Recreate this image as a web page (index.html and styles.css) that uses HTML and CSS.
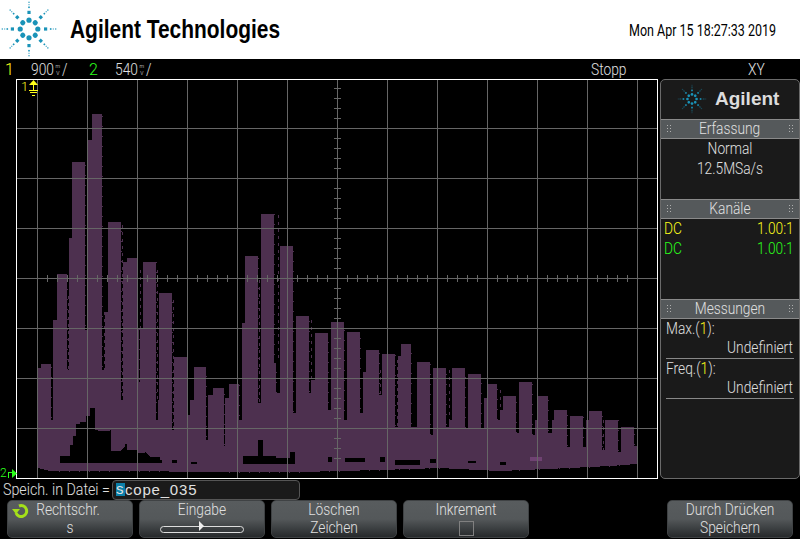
FILE: index.html
```html
<!DOCTYPE html>
<html lang="de">

<head>
    <meta charset="UTF-8">
    <title>Agilent Technologies</title>
    <link rel="stylesheet" href="styles.css">
</head>

<body>
    <svg class="defs" width="0" height="0">
        <defs>
            <!-- one arm of the starburst, rotated eight times below -->
            <g id="arm">
                <circle cx="0" cy="-8.8" r="2.6" />
                <rect x="-1.6" y="-18.2" width="3.2" height="3.2" />
                <rect x="-0.8" y="-22.5" width="1.6" height="1.6" />
                <rect x="-0.6" y="-27.3" width="1.2" height="1.2" />
                <rect x="-0.5" y="-24.8" width="1" height="1" />
            </g>
            <g id="star">
                <use href="#arm" />
                <use href="#arm" transform="rotate(45)" />
                <use href="#arm" transform="rotate(90)" />
                <use href="#arm" transform="rotate(135)" />
                <use href="#arm" transform="rotate(180)" />
                <use href="#arm" transform="rotate(225)" />
                <use href="#arm" transform="rotate(270)" />
                <use href="#arm" transform="rotate(315)" />
            </g>
        </defs>
    </svg>

    <header class="header">
        <svg class="logo" width="58" height="58" viewBox="-29 -29 58 58">
            <use href="#star" />
        </svg>
        <div class="brand">Agilent Technologies</div>
        <div class="clock">Mon Apr 15 18:27:33 2019</div>
    </header>

    <div class="status">
        <span class="ch1 ch-num">1</span>
        <span class="scale n">900<span class="unit">m<br>V</span>/</span>
        <span class="ch2 ch-num">2</span>
        <span class="scale n">540<span class="unit">m<br>V</span>/</span>
        <span class="run n">Stopp</span>
        <span class="mode n">XY</span>
    </div>

    <div class="main">
        <div class="gutter"></div>
        <div class="screen">
            <svg class="trace" width="640" height="398" viewBox="17 80 640 398" shape-rendering="crispEdges">
                <!-- envelope -->
                <path class="wave" d="M38 468V368H41V364H51V420H53V320H57V274H67V370H69V238H72V162H85V330H88V140H92V114H102V370H105V312H108V222H121V400H123V262H127V258H137V328H139V382H140V328H143V262H156V420H158V400H159V293H172V430H174V357H187V415H190V400H194V367H206V440H208V395H213V388H224V446H225V398H229V384H239V420H242V323H245V256H258V403H261V214H274V363H276V393H280V246H293V413H296V316H309V393H311V380H315V333H328V410H331V322H344V420H347V332H360V413H363V372H366V350H379V395H382V354H395V427H398V356H401V344H411V427H417V362H430V435H433V368H446V427H449V420H452V368H465V428H468V374H481V428H484V398H487V384H497V420H500V410H503V396H516V433H519V382H532V435H535V420H538V396H548V433H552V420H554V410H567V447H570V416H583V447H586V420H589V411H602V450H605V420H618V452H621V427H634V446H637V464L610 466L570 468L500 471L440 468L380 470L300 472L220 472L120 471L50 471Z" />
                <!-- gaps inside the envelope -->
                <path class="hole" d="M60 463V456H70V445H73V436H76V424H80V422H86V416H90V408H95V430H98V431H110V430H111V451H120L125 447V444H127V450H137V453H145V452L150 457H160V460H162V463Z" />
                <path class="hole" d="M243 464V456H258V440H263V456H276V458H290V452H295V464Z" />
                <path class="hole" d="M328 457H332V462H328ZM345 458H365V462H345ZM380 457H385V462H380ZM395 460H420V465H395ZM172 460H177V463H172ZM191 462H197V464H191ZM430 459H436V463H430ZM468 461H476V463H468ZM500 462H506V465H500Z" />
                <!-- stray samples in the dark gaps -->
                <path class="speck" d="M68 296V370M87 130V330M104 312V370M122 225V400M140 270V328M157 270V400M173 300V430M259 280V403M278 215V360M311 320V393M380 370V395M397 360V427M586 420V447M603 420V450M449 370V427M500 390V420" />
                <path class="hot" d="M530 457H542V461H530Z" />
            </svg>
            <div class="grid"></div>
            <div class="ticks-h"></div>
            <div class="ticks-v"></div>
            <div class="marker1">1<svg width="9" height="16" viewBox="0 0 9 16">
                    <path d="M4.5 0L9 5H0Z" fill="#ffff1a" />
                    <path d="M4 5H5V10H4ZM0 10H9V11H0ZM1 12H8V13H1ZM3 15H6V16H3Z" fill="#ffff1a" />
                </svg></div>
            <div class="marker2">2<svg width="10" height="9" viewBox="0 0 10 9">
                    <path d="M4 0L9 4.5L4 9Z" fill="#2bff1a" />
                    <path d="M0 9V3H5V4H1V9Z" fill="#2bff1a" />
                </svg></div>
        </div>

        <aside class="panel">
            <div class="panel-logo">
                <svg width="30" height="30" viewBox="-29 -29 58 58">
                    <use href="#star" />
                </svg>
                <span>Agilent</span>
            </div>
            <div class="band"><span class="n">Erfassung</span></div>
            <div class="sect sect-acq">
                <div class="center n">Normal</div>
                <div class="center n">12.5MSa/s</div>
            </div>
            <div class="band"><span class="n">Kanäle</span></div>
            <div class="sect sect-ch">
                <div class="row ch1"><span class="n">DC</span><span class="right n">1.00:1</span></div>
                <div class="row ch2"><span class="n">DC</span><span class="right n">1.00:1</span></div>
            </div>
            <div class="band"><span class="n">Messungen</span></div>
            <div class="sect">
                <div class="meas">
                    <div class="meas-name n">Max.(<span class="ch1">1</span>):</div>
                    <div class="right n">Undefiniert</div>
                </div>
                <div class="meas">
                    <div class="meas-name n">Freq.(<span class="ch1">1</span>):</div>
                    <div class="right n">Undefiniert</div>
                </div>
            </div>
        </aside>
    </div>

    <div class="entry">
        <span class="entry-label n">Speich. in Datei =</span>
        <div class="entry-field"><span class="cursor">s</span>cope_035</div>
    </div>

    <div class="keys">
        <div class="key">
            <svg class="key-icon" width="17" height="16" viewBox="0 0 17 16">
                <path d="M7 3A5.5 5.5 0 1 1 4 10" fill="none" stroke="#a4e01a" stroke-width="3" />
                <path d="M0 6H8L4 11Z" fill="#a4e01a" />
            </svg>
            <div class="center n key-shift">Rechtschr.</div>
            <div class="center n">s</div>
        </div>
        <div class="key">
            <div class="center n">Eingabe</div>
            <div class="slider"><span></span></div>
        </div>
        <div class="key">
            <div class="center n">Löschen</div>
            <div class="center n">Zeichen</div>
        </div>
        <div class="key">
            <div class="center n">Inkrement</div>
            <div class="check"></div>
        </div>
        <div class="key key-empty"></div>
        <div class="key">
            <div class="center n">Durch Drücken</div>
            <div class="center n">Speichern</div>
        </div>
    </div>
</body>

</html>
```

FILE: styles.css
```css
* {
    box-sizing: border-box;
}

html,
body {
    margin: 0;
    height: 539px;
    overflow: hidden;
    background: #000;
}

body {
    width: 800px;
    font-family: Roboto, "Liberation Sans", sans-serif;
    font-weight: 300;
    font-size: 16px;
    color: #e0e0e0;
}

.defs {
    position: absolute;
}

/* the scope font is tall and narrow */
.n {
    display: block;
    white-space: nowrap;
    transform: scaleX(0.86);
    transform-origin: left center;
}

.center.n,
.band .n {
    transform-origin: center;
}

.right.n {
    transform-origin: right center;
}

.ch1 {
    color: #ffff1a;
}

.ch2 {
    color: #2bff1a;
}

/* white top strip */
.header {
    height: 59px;
    background: #fff;
    display: flex;
    align-items: center;
    color: #000;
    fill: #1a93b8;
}

.logo {
    margin: -1px 12px 0 0;
}

.brand {
    flex: 1;
    font-family: "Liberation Sans", sans-serif;
    font-size: 26px;
    font-weight: bold;
    white-space: nowrap;
    transform: scaleX(0.805);
    transform-origin: left center;
}

.clock {
    margin-right: 24px;
    font-size: 17px;
    font-weight: 400;
    white-space: nowrap;
    transform: scaleX(0.735);
    transform-origin: right center;
}

/* channel scale line */
.status {
    height: 20px;
    display: flex;
    align-items: center;
    padding-left: 5px;
}

.ch-num {
    width: 26px;
}

.scale {
    width: 58px;
    display: flex;
    align-items: center;
}

.unit {
    margin: 0 2px;
    font-size: 6px;
    line-height: 7.5px;
    text-align: center;
}

.run {
    margin-left: 418px;
    width: 157px;
}

.mode {
    width: 20px;
}

.main {
    display: flex;
    height: 400px;
}

.gutter {
    width: 16px;
}

/* scope graticule */
.screen {
    position: relative;
    width: 642px;
    height: 400px;
    border: 1px solid #fff;
}

.trace {
    position: absolute;
    left: 0;
    top: 0;
}

.wave {
    fill: #4d304f;
    stroke: #4d304f;
    stroke-dasharray: 1 9;
}

.hole {
    fill: #000;
}

.speck {
    fill: none;
    stroke: #4d304f;
    stroke-dasharray: 3 4;
}

.hot {
    fill: #6f4272;
}

.grid {
    position: absolute;
    inset: 0;
    background-image: linear-gradient(90deg, #666 1px, transparent 1px),
        linear-gradient(#666 1px, transparent 1px);
    background-size: 50px 100%, 100% 50px;
    background-position: 20px 0, 0 48px;
}

.ticks-h {
    position: absolute;
    left: 20px;
    width: 600px;
    top: 195px;
    height: 7px;
    background-image: linear-gradient(90deg, #666 1px, transparent 1px);
    background-size: 10px 7px;
}

.ticks-v {
    position: absolute;
    top: 8px;
    height: 380px;
    left: 317px;
    width: 7px;
    background-image: linear-gradient(#666 1px, transparent 1px);
    background-size: 7px 10px;
}

.marker1 {
    position: absolute;
    left: 4px;
    top: 0;
    display: flex;
    gap: 1px;
    color: #ffff1a;
    font-size: 13px;
    line-height: 14px;
}

.marker2 {
    position: absolute;
    left: -17px;
    bottom: 0;
    display: flex;
    align-items: flex-end;
    gap: 1px;
    color: #2bff1a;
    font-size: 12px;
    line-height: 10px;
}

/* right side menu */
.panel {
    width: 140px;
    height: 400px;
    margin-left: 2px;
    background: #1a1a1a;
    border: 1px solid #6a6a6a;
    border-radius: 5px;
}

.panel-logo {
    height: 39px;
    display: flex;
    align-items: center;
    gap: 8px;
    padding: 0 0 2px 16px;
    fill: #1a93b8;
    font-family: "Liberation Sans", sans-serif;
    font-weight: bold;
    font-size: 19px;
    color: #dcdcdc;
}

.band {
    height: 20px;
    line-height: 18px;
    background: #55595b;
    border-top: 1px solid #8a8a8a;
    border-bottom: 1px solid #8a8a8a;
    display: flex;
    justify-content: space-between;
    padding: 0 5px;
}

.band::before,
.band::after {
    content: "";
    width: 6px;
    height: 9px;
    margin-top: 4px;
    background-image: radial-gradient(#b0b0b0 0.7px, transparent 0.9px);
    background-size: 3px 3px;
}

.sect {
    padding: 0 5px;
}

.sect-acq {
    height: 60px;
}

.sect-ch {
    height: 80px;
    padding: 0 5px 0 3px;
}

.center {
    text-align: center;
}

.sect-acq .center,
.row {
    height: 20px;
    line-height: 19px;
}

.row {
    display: flex;
    justify-content: space-between;
}

.meas {
    height: 40px;
    line-height: 20px;
    border-bottom: 1px solid #888;
}

.meas-name {
    height: 19px;
    line-height: 19px;
}

.meas .right {
    margin-right: 1px;
}

.right {
    text-align: right;
}

/* file name entry */
.entry {
    height: 21px;
    display: flex;
    align-items: center;
    padding-left: 3px;
}

.entry-label.n {
    width: 109px;
    transform: scaleX(0.89);
}

.entry-field {
    width: 188px;
    height: 20px;
    line-height: 18px;
    background: #1a1a1a;
    border: 1px solid #555;
    border-radius: 4px;
    padding-left: 3px;
    font-family: "Liberation Sans", sans-serif;
    font-weight: 400;
    font-size: 15px;
    letter-spacing: 0.8px;
}

.cursor {
    display: inline-block;
    width: 9px;
    height: 13px;
    line-height: 12px;
    background: #0b7fa8;
    vertical-align: 1px;
}

/* softkeys */
.keys {
    display: flex;
    gap: 6px;
    padding-left: 7px;
}

.key {
    position: relative;
    width: 126px;
    height: 38px;
    border: 1px solid #3f4244;
    border-radius: 5px;
    background: linear-gradient(#585c5e 0, #54585a 50%, #26292b 100%);
    line-height: 18px;
}

.key-empty {
    visibility: hidden;
}

.key-icon {
    position: absolute;
    left: 4px;
    top: 2px;
}

.key-shift {
    margin-left: -4px;
}

.slider {
    position: relative;
    width: 84px;
    height: 7px;
    margin: 7px auto 0;
    border: 1px solid #ddd;
    border-radius: 4px;
}

.slider span {
    position: absolute;
    left: 38px;
    top: -6px;
    width: 0;
    height: 0;
    border-left: 5px solid #eee;
    border-top: 5px solid transparent;
    border-bottom: 5px solid transparent;
}

.check {
    width: 15px;
    height: 15px;
    margin: 2px auto 0;
    border: 1px solid #808080;
}
```
